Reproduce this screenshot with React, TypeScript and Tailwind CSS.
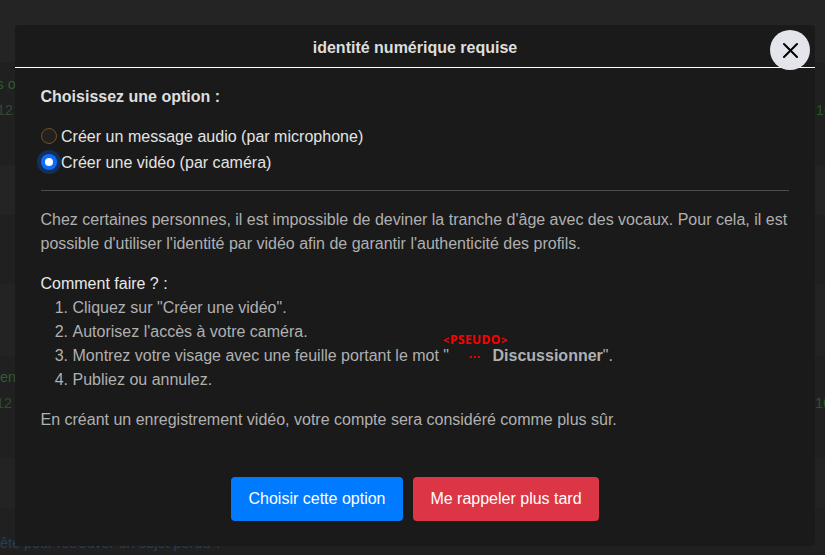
import React from "react";

interface OptionProps {
  label: string;
  checked?: boolean;
}

function Option({ label, checked }: OptionProps) {
  return (
    <label className="flex items-center h-[26px] text-[#e4e4e4]">
      <span
        className={
          checked
            ? "w-4 h-4 mr-1 rounded-full bg-[#0d6efd] flex items-center justify-center shadow-[0_0_0_4px_#14305a]"
            : "w-4 h-4 mr-1 rounded-full bg-[#212121] border border-[#7a4e1c]"
        }
      >
        {checked && <span className="w-2 h-2 rounded-full bg-white" />}
      </span>
      <span className="pt-[2px] tracking-[0.02px]">{label}</span>
    </label>
  );
}

// dimmed message list behind the dialog
function Backdrop() {
  return (
    <div className="h-full flex flex-col overflow-hidden whitespace-nowrap text-[14.4px]">
      <div className="h-[62px] shrink-0 bg-[#242424]" />
      <div className="h-[103px] shrink-0 bg-[#202020] pt-[10px]">
        <div className="h-[26px] leading-6 text-[#2f5c2f]">
          <span className="-ml-[3.4px]">s o</span>
        </div>
        <div className="flex justify-between leading-6 text-[#2e4c30]">
          <span className="-ml-[3px]">12</span>
          <span className="-mr-[7px] text-[#245824]">16</span>
        </div>
      </div>
      <div className="h-[50px] shrink-0 bg-[#242424]" />
      <div className="h-[69px] shrink-0 bg-[#202020]" />
      <div className="h-[72px] shrink-0 bg-[#232323]" />
      <div className="h-[102px] shrink-0 bg-[#202020] pt-[9px]">
        <div className="h-[26px] leading-6 text-[#2f5c2f]">en</div>
        <div className="flex justify-between leading-6 text-[#2e4c30]">
          <span className="-ml-[4px]">12</span>
          <span className="-mr-[6px] text-[#245824]">16</span>
        </div>
      </div>
      <div className="h-[50px] shrink-0 bg-[#232323]" />
      <div className="h-[47px] shrink-0 bg-[#202020] pt-[23px] leading-6 text-[#263e56]">
        ête pour retrouver un objet perdu ?
      </div>
    </div>
  );
}

export default function App() {
  return (
    <div className="relative w-[825px] h-[555px] overflow-hidden bg-[#202020] text-base font-['Liberation_Sans',Arial,sans-serif]">
      <Backdrop />
      <div className="absolute left-[15px] top-[25px] w-[800px] h-[521px] rounded bg-[#1a1a1a] text-[#b0b0b0] leading-6">
        <h1 className="h-[43px] pt-[11px] border-b border-white text-center font-bold text-[#dedede]">
          identité numérique requise
        </h1>
        <button
          aria-label="Fermer"
          className="absolute right-[5px] top-[5px] w-10 h-10 rounded-full bg-[#e4e4eb] flex items-center justify-center"
        >
          <svg width="16" height="16" viewBox="0 0 16 16">
            <path d="M2 2L15 15M15 2L2 15" stroke="#000" strokeWidth="2" strokeLinecap="round" />
          </svg>
        </button>

        <div className="px-[26px] pt-[17px]">
          <h2 className="-ml-[0.5px] font-bold text-[#dedede] mb-[14px]">Choisissez une option :</h2>
          <Option label="Créer un message audio (par microphone)" />
          <Option label="Créer une vidéo (par caméra)" checked />
          <hr className="mt-[15px] mb-[17px] border-t border-[#4c4c4c]" />
          <div className="-ml-[0.5px]">
            <p className="-mr-2 mb-4">
              Chez certaines personnes, il est impossible de deviner la tranche d'âge avec des vocaux. Pour cela, il est
              <br />
              possible d'utiliser l'identité par vidéo afin de garantir l'authenticité des profils.
            </p>
            <p className="text-[#e8e8e8]">Comment faire ? :</p>
            <ol className="list-decimal pl-8 mb-4">
              <li>Cliquez sur "Créer une vidéo".</li>
              <li>Autorisez l'accès à votre caméra.</li>
              <li>
                Montrez votre visage avec une feuille portant le mot "
                <span className="relative inline-block w-[43.5px] h-6 align-top text-center font-bold text-xs leading-[26px] text-[#ff0000]">
                  <span className="pl-2">···</span>
                  <span className="absolute -left-[7px] -top-3 flex leading-4 font-['Open_Sans',sans-serif]">
                    <span className="w-[8px] text-[11px]">{"<"}</span>
                    <span className="w-[51px] text-left tracking-[0.4px]">PSEUDO</span>
                    <span className="text-[11px]">{">"}</span>
                  </span>
                </span>
                <b>Discussionner</b>".
              </li>
              <li>Publiez ou annulez.</li>
            </ol>
            <p>En créant un enregistrement vidéo, votre compte sera considéré comme plus sûr.</p>
          </div>
        </div>

        <div className="mt-[45px] flex justify-center gap-[10px] text-white">
          <button className="w-[172px] h-11 rounded bg-[#007bff]">Choisir cette option</button>
          <button className="w-[186px] h-11 rounded bg-[#dc3545]">Me rappeler plus tard</button>
        </div>
      </div>
    </div>
  );
}
